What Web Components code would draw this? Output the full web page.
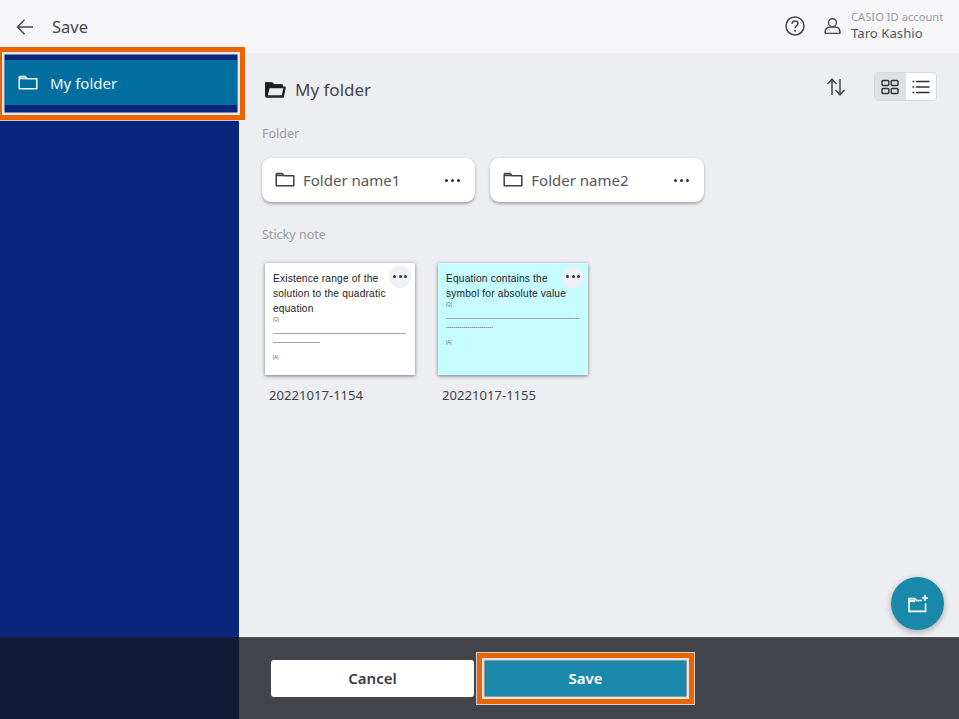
<!DOCTYPE html>
<html>
<head>
<meta charset="utf-8">
<title>Save</title>
<style>
  html, body { margin: 0; padding: 0; height: 100%; }
  body { font-family: "Noto Sans", sans-serif; overflow: hidden; }
</style>
</head>
<body>
<save-screen></save-screen>
<script>
const FOLDER = `<path d="M1.2 3.2 V14.8 H18.8 V4.8 H9 L7.4 2.6 H1.8 Z" fill="none" stroke="currentColor" stroke-width="1.5" stroke-linejoin="round"/><path d="M1.5 3.6 H7.2 L8.6 5.2 H1.5 Z" fill="currentColor"/>`;

class AppHeader extends HTMLElement {
  constructor() {
    super();
    this.attachShadow({mode: "open"}).innerHTML = `
    <style>
      :host { display: flex; align-items: center; height: 53px; background: #f7f7fa; color: #45464d; flex: none; }
      .back { margin-left: 16px; width: 18px; height: 18px; display: block; }
      .title { margin-left: 18px; font-size: 16.5px; line-height: 53px; }
      .right { margin-left: auto; display: flex; align-items: center; }
      .help { width: 20px; height: 20px; display: block; margin-right: 19px; margin-top: -1px; }
      .user { width: 17px; height: 18px; display: block; margin-right: 10px; margin-top: -2px; }
      .acct { width: 108px; }
      .acct small { display: block; font-size: 11.2px; line-height: 14px; color: #9a9ba0; white-space: nowrap; }
      .acct span { display: block; font-size: 13.2px; line-height: 19px; color: #55565c; }
    </style>
    <svg class="back" viewBox="0 0 18 18" fill="none" stroke="currentColor" stroke-width="1.4"><path d="M17 9 H1.5 M8.5 1.8 L1.5 9 L8.5 16.2"/></svg>
    <div class="title">Save</div>
    <div class="right">
      <svg class="help" viewBox="0 0 20 20" fill="none" stroke="currentColor" stroke-width="1.5"><circle cx="10" cy="10" r="9"/><path d="M7 7.8 C7 5.8 8.4 4.9 10 4.9 C11.7 4.9 13 6 13 7.5 C13 9.6 10 9.6 10 12.2"/><circle cx="10" cy="14.8" r="1" fill="currentColor" stroke="none"/></svg>
      <svg class="user" viewBox="0 0 18 18" fill="none" stroke="currentColor" stroke-width="1.5"><circle cx="9" cy="5.6" r="4.2"/><path d="M1.2 16.8 V15 C1.2 12.2 3 10.2 6 10.2 H12 C15 10.2 16.8 12.2 16.8 15 V16.8 Z" stroke-linejoin="round"/></svg>
      <div class="acct"><small>CASIO ID account</small><span>Taro Kashio</span></div>
    </div>`;
  }
}
customElements.define("app-header", AppHeader);

class CalloutFrame extends HTMLElement {
  constructor() {
    super();
    this.attachShadow({mode: "open"}).innerHTML = `
    <style>
      :host { position: absolute; display: block; box-sizing: border-box; border: 5px solid #ec6400; outline: 1.5px solid rgba(240,240,240,.8); box-shadow: inset 0 0 0 2.5px #e4e6ea; pointer-events: none; z-index: 5; }
    </style>`;
  }
}
customElements.define("callout-frame", CalloutFrame);

class SideItem extends HTMLElement {
  constructor() {
    super();
    this.attachShadow({mode: "open"}).innerHTML = `
    <style>
      :host { display: block; position: relative; background: #0a267c; padding: 7px 2px 8px 5px; }
      .in { display: flex; align-items: center; box-sizing: border-box; height: 45px; padding-top: 1px; background: #006f9f; color: #f2f6f9; font-size: 15px; }
      svg { width: 20px; height: 20px; margin: 0 12px 0 13px; display: block; }
      callout-frame { left: -3px; top: -6px; right: -6px; bottom: -7px; }
    </style>
    <div class="in"><svg viewBox="0 0 20 18" color="#f2f6f9">${FOLDER}</svg><slot></slot></div>
    <callout-frame></callout-frame>`;
  }
}
customElements.define("side-item", SideItem);

class FolderCard extends HTMLElement {
  constructor() {
    super();
    this.attachShadow({mode: "open"}).innerHTML = `
    <style>
      :host { display: flex; align-items: center; box-sizing: border-box; width: 213.3px; height: 44px; background: #fff; border-radius: 9px; box-shadow: 0 1.5px 3px rgba(0,0,0,.3); color: #55565c; font-size: 15px; }
      svg { width: 20px; height: 18px; margin: 0 8px 0 13px; display: block; color: #3f4046; }
      .more { margin-left: auto; margin-right: 15px; display: flex; gap: 3px; }
      .more i { width: 3px; height: 3px; border-radius: 50%; background: #303136; display: block; }
    </style>
    <svg viewBox="0 0 20 18">${FOLDER}</svg><slot></slot>
    <div class="more"><i></i><i></i><i></i></div>`;
  }
}
customElements.define("folder-card", FolderCard);

class StickyNote extends HTMLElement {
  constructor() {
    super();
    this.attachShadow({mode: "open"}).innerHTML = `
    <style>
      :host { display: block; width: 158px; color: #404147; }
      .note { position: relative; box-sizing: border-box; width: 150px; height: 112px; margin-left: 3px; padding: 8px 8px 0 8px; background: var(--note, #fff); box-shadow: 0 1px 3.5px rgba(0,0,0,.5); font-family: "Liberation Sans", Arial, sans-serif; color: #1c1c22; }
      .t { font-size: 10.2px; line-height: 15px; letter-spacing: .18px; }
      .s { font-size: 4.5px; line-height: 6px; color: #666; margin-top: 1px; }
      .r1, .r2 { height: 1px; background: repeating-linear-gradient(90deg, #989898 0 1px, #b4b4b4 1px 2px); }
      .r1 { margin: 10px 1px 0 0; }
      .r2 { width: 47px; margin: 8px 0 0 0; }
      .s.a { margin-top: 12px; }
      .more { position: absolute; right: 4px; top: 3px; width: 22px; height: 22px; border-radius: 50%; background: rgba(238,239,243,.95); display: flex; align-items: center; justify-content: center; gap: 2.5px; }
      .more i { width: 3px; height: 3px; border-radius: 50%; background: #303136; display: block; margin-top: -1px; }
      .name { font-size: 13.1px; line-height: 18px; margin: 11px 0 0 7px; font-family: "Noto Sans", sans-serif; white-space: nowrap; }
    </style>
    <div class="note">
      <div class="t"><slot></slot></div>
      <div class="s">[Q]</div>
      <div class="r1"></div><div class="r2"></div>
      <div class="s a">[A]</div>
      <div class="more"><i></i><i></i><i></i></div>
    </div>
    <div class="name"></div>`;
  }
  connectedCallback() {
    this.shadowRoot.querySelector(".name").textContent = this.getAttribute("name") || "";
  }
}
customElements.define("sticky-note", StickyNote);

class FolderView extends HTMLElement {
  constructor() {
    super();
    this.attachShadow({mode: "open"}).innerHTML = `
    <style>
      :host { display: block; position: relative; flex: 1; background: #edeef2; padding: 0 22px 0 23px; color: #45464d; }
      .head { display: flex; align-items: center; height: 32px; padding-top: 20px; font-size: 17px; color: #45464d; }
      .head svg.f { width: 22px; height: 19px; margin: 0 9px 0 2px; color: #1d1d22; display: block; }
      .sort { margin-left: auto; width: 20px; height: 20px; margin-right: 28px; display: block; margin-top: -5px; }
      .toggle { display: flex; width: 63px; height: 29px; margin-top: -5px; background: #fff; border: 1px solid #d8d9dd; border-radius: 4px; box-sizing: border-box; overflow: hidden; }
      .toggle span { flex: 1; display: flex; align-items: center; justify-content: center; }
      .toggle span:first-child { background: #dfe0e2; }
      .toggle svg { width: 18px; height: 16px; display: block; }
      .label { font-size: 12.5px; line-height: 18px; color: #9a9ba0; }
      .l1 { margin-top: 20px; }
      .l2 { margin-top: 24px; }
      .folders { display: flex; gap: 15px; margin-top: 15px; }
      .notes { display: flex; gap: 15px; margin-top: 19px; }
      .fab { position: absolute; right: 15px; bottom: 7px; width: 53px; height: 53px; border-radius: 50%; background: #1a88aa; box-shadow: 0 2px 6px rgba(0,0,0,.3); display: flex; align-items: center; justify-content: center; }
      .fab svg { width: 22px; height: 20px; display: block; }
    </style>
    <div class="head">
      <svg class="f" viewBox="0 0 22 19"><path d="M1 3 H8 L10 5 H18 V7 H5 L2.8 16 H18.6 L20 8.4" fill="none" stroke="currentColor" stroke-width="1.6"/><path d="M1 2.4 H8.2 L10 4.4 H17.8 V7.6 H4.6 L2.6 16.6 H1 Z" fill="currentColor"/><path d="M4.5 7.4 H21 L19 17 H2.5 Z" fill="none" stroke="currentColor" stroke-width="1.6" stroke-linejoin="round"/></svg>
      My folder
      <svg class="sort" viewBox="0 0 20 20" fill="none" stroke="#45464d" stroke-width="1.5"><path d="M6 18 V2.5 M1.5 7 L6 2.2 L10.5 7 M14 2 V17.5 M9.5 13 L14 17.8 L18.5 13"/></svg>
      <div class="toggle">
        <span><svg viewBox="0 0 18 16" fill="none" stroke="#303136" stroke-width="1.4"><rect x="1" y="1.5" width="6.8" height="5" rx="1"/><rect x="10.2" y="1.5" width="6.8" height="5" rx="1"/><rect x="1" y="9.5" width="6.8" height="5" rx="1"/><rect x="10.2" y="9.5" width="6.8" height="5" rx="1"/></svg></span>
        <span><svg viewBox="0 0 18 16" fill="none" stroke="#303136" stroke-width="1.3"><path d="M4 2.5 H17.5 M4 8 H17.5 M4 13.5 H17.5"/><path d="M.5 2.5 H2.3 M.5 8 H2.3 M.5 13.5 H2.3" stroke-width="1.6"/></svg></span>
      </div>
    </div>
    <div class="label l1">Folder</div>
    <div class="folders"><slot name="folders"></slot></div>
    <div class="label l2">Sticky note</div>
    <div class="notes"><slot name="notes"></slot></div>
    <div class="fab"><svg viewBox="0 0 22 20" fill="none" stroke="#fff" stroke-width="1.6"><path d="M15 6.5 H9.5 L7.8 4.6 H2 V17.4 H18.6 V9.5"/><path d="M2 7 H8" stroke-width="2.2"/><path d="M18 1 V7 M15 4 H21"/></svg></div>`;
  }
}
customElements.define("folder-view", FolderView);

class FooterBar extends HTMLElement {
  constructor() {
    super();
    this.attachShadow({mode: "open"}).innerHTML = `
    <style>
      :host { display: flex; height: 82px; flex: none; position: relative; }
      .side { width: 239px; background: #111c38; flex: none; }
      .bar { flex: 1; background: #434449; border-top: 1px solid #55565b; box-sizing: border-box; display: flex; align-items: center; padding: 0 0 0 32px; }
      button { font: 600 15px "Noto Sans", sans-serif; border: 0; border-radius: 3px; display: block; padding: 0 0 1.5px; box-sizing: border-box; }
      .cancel { width: 203px; height: 37px; background: #fff; color: #3a3b42; margin-right: 0; }
      .wrap { position: relative; margin-left: 11px; }
      .save { width: 201px; height: 35px; background: #1a88aa; color: #fff; border-radius: 0; }
      callout-frame { left: -8px; top: -8px; right: -8px; bottom: -8px; }
    </style>
    <div class="side"></div>
    <div class="bar">
      <button class="cancel">Cancel</button>
      <div class="wrap"><button class="save">Save</button><callout-frame></callout-frame></div>
    </div>`;
  }
}
customElements.define("footer-bar", FooterBar);

class SaveScreen extends HTMLElement {
  constructor() {
    super();
    this.attachShadow({mode: "open"}).innerHTML = `
    <style>
      :host { display: flex; flex-direction: column; width: 959px; height: 719px; }
      .mid { flex: 1; display: flex; min-height: 0; }
      aside { width: 239px; flex: none; background: #0a267c; }
    </style>
    <app-header></app-header>
    <div class="mid">
      <aside><side-item>My folder</side-item></aside>
      <folder-view>
        <folder-card slot="folders">Folder name1</folder-card>
        <folder-card slot="folders">Folder name2</folder-card>
        <sticky-note slot="notes" name="20221017-1154">Existence range of the<br>solution to the quadratic<br>equation</sticky-note>
        <sticky-note slot="notes" name="20221017-1155" style="--note:#c6fbff">Equation contains the<br>symbol for absolute value</sticky-note>
      </folder-view>
    </div>
    <footer-bar></footer-bar>`;
  }
}
customElements.define("save-screen", SaveScreen);
</script>
</body>
</html>
